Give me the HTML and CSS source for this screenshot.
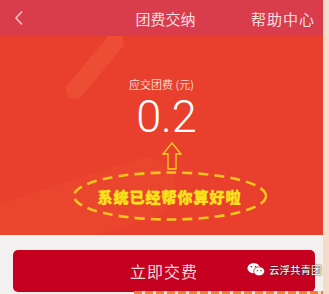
FILE: index.html
```html
<!DOCTYPE html>
<html>
<head>
<meta charset="utf-8">
<link rel="stylesheet" href="styles.css">
</head>
<body>
<div class="page">
  <div class="header">
    <svg class="back" width="10" height="16" viewBox="0 0 10 16">
      <path d="M8 1.5 L2 8 L8 14.5" fill="none" stroke="#f3c3c8" stroke-width="1.6"/>
    </svg>
    <span class="title">团费交纳</span>
    <span class="help">帮助中心</span>
  </div>
  <div class="hero">
    <div class="streak s1"></div>
    <div class="streak s2"></div>
    <div class="label">应交团费 (元)</div>
    <div class="amount">0.2</div>
    <svg class="arrow" width="20" height="28" viewBox="0 0 20 28">
      <path d="M10 1 L19 12 L14 12 L14 27 L6 27 L6 12 L1 12 Z" fill="none" stroke="#f7d21a" stroke-width="1.3"/>
    </svg>
    <div class="ellipse">
      <svg class="ring" width="198" height="52" viewBox="0 0 198 52">
        <ellipse cx="99" cy="26" rx="96" ry="23.5" fill="none" stroke="#f3c51c" stroke-width="2.6" stroke-dasharray="10 6"/>
      </svg>
      <span class="note">系统已经帮你算好啦</span>
    </div>
  </div>
  <div class="footer">
    <div class="btn">立即交费</div>
    <div class="mark">
      <svg width="18" height="15" viewBox="0 0 20 16">
        <ellipse cx="7.5" cy="6.5" rx="7" ry="5.8" fill="#fff"/>
        <ellipse cx="13.5" cy="10" rx="6" ry="5" fill="#fff" stroke="#9b1020" stroke-width="0.8"/>
        <circle cx="5" cy="5" r="0.9" fill="#9b1020"/>
        <circle cx="9.5" cy="5" r="0.9" fill="#9b1020"/>
        <circle cx="11.5" cy="9.3" r="0.7" fill="#9b1020"/>
        <circle cx="15.5" cy="9.3" r="0.7" fill="#9b1020"/>
      </svg>
      <span>云浮共青团</span>
    </div>
  </div>
  <div class="strip"></div>
</div>
</body>
</html>
```
FILE: styles.css
```css
* { box-sizing: border-box; }
html, body { margin: 0; padding: 0; }
body {
  width: 329px;
  height: 294px;
  overflow: hidden;
  background: #f3f1ef;
  font-family: "Noto Sans CJK SC", "Noto Sans", sans-serif;
}
.page {
  width: 329px;
  height: 294px;
  display: flex;
  flex-direction: column;
  border-right: 6px solid #f4dccb;
  position: relative;
}
.header {
  height: 36px;
  background: #d93c4b;
  display: flex;
  align-items: center;
  position: relative;
  color: #f7dfe2;
}
.back {
  margin-left: 14px;
}
.title {
  position: absolute;
  left: 0;
  right: 0;
  text-align: center;
  font-size: 15px;
  padding-left: 8px;
}
.help {
  margin-left: auto;
  margin-right: 8px;
  font-size: 15px;
  letter-spacing: 1px;
}
.hero {
  height: 199px;
  background: #e8402d;
  display: flex;
  flex-direction: column;
  align-items: center;
  position: relative;
  overflow: hidden;
}
.streak {
  position: absolute;
  background: rgba(245, 100, 60, 0.4);
  border-radius: 12px;
  transform: rotate(40deg);
}
.s1 { width: 18px; height: 80px; left: 86px; top: -10px; }
.s2 { width: 240px; height: 60px; left: -60px; top: 150px; transform: rotate(-18deg); background: rgba(240, 90, 50, 0.22); border-radius: 30px; }
.label {
  margin-top: 41px;
  font-size: 11px;
  color: #f8d6cc;
  line-height: 14px;
  position: relative;
}
.amount {
  font-family: Roboto, sans-serif;
  font-weight: 300;
  font-size: 45px;
  line-height: 46px;
  color: #ffffff;
  margin-top: 3px;
  margin-left: 10px;
  position: relative;
}
.arrow {
  margin-top: 2px;
  margin-left: 20px;
  position: relative;
}
.ellipse {
  position: relative;
  width: 198px;
  height: 52px;
  display: flex;
  align-items: center;
  justify-content: center;
  margin-left: 16px;
}
.ring { position: absolute; left: 0; top: 0; }
.note {
  font-size: 15px;
  font-weight: 900;
  color: #f9e21c;
  position: relative;
  letter-spacing: 1px;
  -webkit-text-stroke: 0.4px #f9e21c;
}
.footer {
  flex: 1;
  position: relative;
  padding: 15px 3px 0 13px;
}
.btn {
  height: 42px;
  width: 302px;
  background: #c6001f;
  border-radius: 5px;
  color: #f7d7da;
  font-size: 16px;
  display: flex;
  align-items: center;
  justify-content: center;
  letter-spacing: 1px;
}
.mark {
  position: absolute;
  left: 247px;
  top: 27px;
  display: flex;
  align-items: center;
  gap: 4px;
  color: #ffffff;
  font-size: 10.5px;
  white-space: nowrap;
  text-shadow: 0 0 2px #333, 0 0 1px #333;
}
.strip {
  position: absolute;
  left: 134px;
  right: 0;
  bottom: 0;
  height: 3px;
  background: repeating-linear-gradient(90deg, #e8843a 0 8px, #f4dccb 8px 11px);
}
```
